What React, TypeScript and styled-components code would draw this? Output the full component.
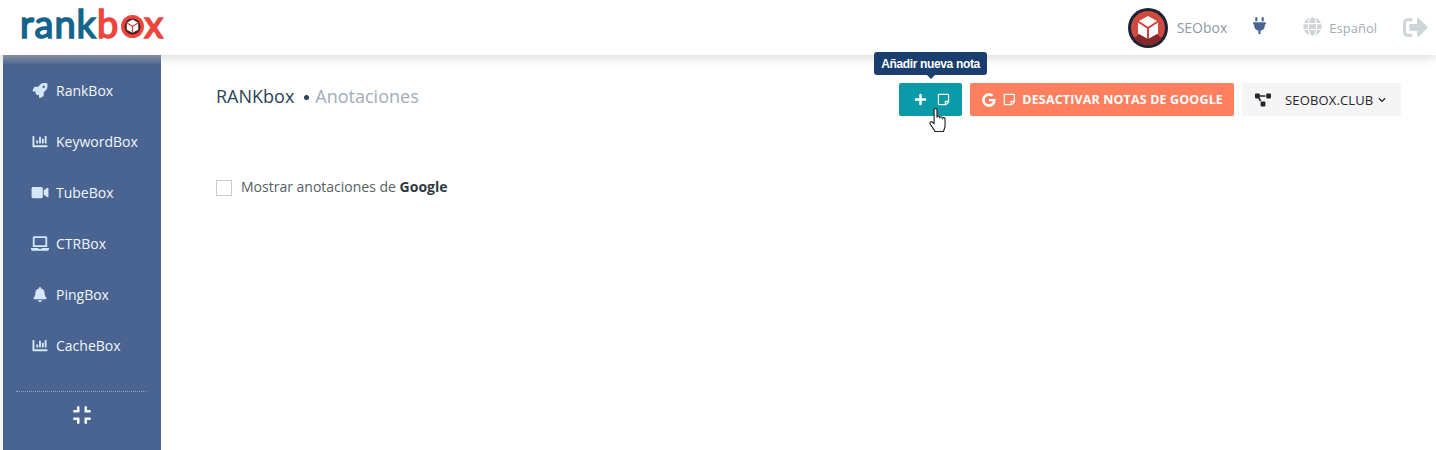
import React from "react";
import styled, { createGlobalStyle } from "styled-components";
import {
  FaBell, FaChartBar, FaChevronDown, FaCompress, FaGlobe, FaGoogle, FaLaptop, FaPlug, FaPlus,
  FaProjectDiagram, FaRegStickyNote, FaRocket, FaSignOutAlt, FaVideo,
} from "react-icons/fa";

const GlobalStyle = createGlobalStyle`
  html, body { margin: 0; padding: 0; background: #fff; }
  body { font-family: "Open Sans", "Liberation Sans", sans-serif; color: #2c3e50; overflow: hidden; }
  * { box-sizing: border-box; }
`;

const Page = styled.div`
  width: 1436px;
  height: 450px;
  display: flex;
  flex-direction: column;
  overflow: hidden;
`;

const Header = styled.header`
  height: 55px;
  flex-shrink: 0;
  display: flex;
  align-items: center;
  justify-content: space-between;
  padding: 0 8px 0 20px;
  background: #fff;
  box-shadow: 0 2px 10px rgba(0, 0, 0, 0.16);
  position: relative;
  z-index: 1;
`;

const Logo = styled.div`
  display: flex;
  align-items: center;
  font-family: "Lato", sans-serif;
  font-weight: 400;
  font-size: 38px;
  line-height: 40px;
  letter-spacing: 1px;
  margin-top: -9px;
  -webkit-text-stroke: 1.6px currentColor;
`;

const LogoPart = styled.span<{ $tone: string }>`
  color: ${(p) => p.$tone};
`;

const LogoCube = styled.span`
  display: flex;
  margin: 6px 0 0 2px;
`;

const HeaderRight = styled.div`
  display: flex;
  align-items: center;
`;

const Account = styled.span`
  display: flex;
  align-items: center;
  gap: 9px;
  font-size: 14px;
  color: #8c9aa8;
  margin-right: 24px;
`;

const PlugIcon = styled(FaPlug)`
  color: #4a6491;
  font-size: 17px;
  margin-right: 35px;
  margin-top: -4px;
`;

const Language = styled.span`
  display: flex;
  align-items: center;
  gap: 7px;
  font-size: 13px;
  color: #a3adb5;
  margin-right: 26px;
`;

const GlobeIcon = styled(FaGlobe)`
  color: #cdd5da;
  font-size: 19px;
  margin-top: -3px;
`;

const ExitIcon = styled(FaSignOutAlt)`
  color: #ced6d9;
  font-size: 25px;
`;

const Body = styled.div`
  flex: 1;
  display: flex;
  min-height: 0;
`;

const Sidebar = styled.nav`
  width: 158px;
  margin-left: 3px;
  flex-shrink: 0;
  background: linear-gradient(#929eb2, #4a6491 10px);
  box-shadow: -3px 0 0 #f6f7f9;
  display: flex;
  flex-direction: column;
  padding-top: 10px;
`;

const NavItem = styled.a`
  height: 51px;
  display: flex;
  align-items: center;
  gap: 7px;
  padding-left: 28px;
  color: #f2f6fb;
  font-size: 14px;
  svg { width: 18px; height: 15px; color: #d3e7f7; flex-shrink: 0; }
`;

const NavDivider = styled.div`
  margin: 20px 15px 0 13px;
  border-top: 1px dotted #8fa3c1;
`;

const Collapse = styled.div`
  display: flex;
  justify-content: center;
  padding-top: 13px;
  color: #fff;
  font-size: 20px;
`;

const Main = styled.main`
  flex: 1;
  padding: 28px 35px 0 55px;
  position: relative;
  z-index: 2;
`;

const Toolbar = styled.div`
  display: flex;
  align-items: flex-start;
  justify-content: space-between;
`;

const Crumbs = styled.div`
  display: flex;
  align-items: center;
  margin-top: -1px;
  font-size: 18px;
  line-height: 28px;
  color: #2c4356;
`;

const CrumbDot = styled.span`
  width: 5px;
  height: 5px;
  border-radius: 50%;
  background: #2c4356;
  margin: 3px 6px 0 10px;
`;

const CrumbCurrent = styled.span`
  color: #a0aeb7;
`;

const Actions = styled.div`
  display: flex;
  gap: 8px;
`;

const ActionButton = styled.button<{ $bg: string; $fg: string }>`
  position: relative;
  height: 33px;
  border: 0;
  border-radius: 2px;
  padding: 0 11px;
  display: flex;
  align-items: center;
  background: ${(p) => p.$bg};
  color: ${(p) => p.$fg};
  font-family: inherit;
  font-size: 12px;
  font-weight: 700;
`;

const AddButton = styled(ActionButton)`
  width: 63px;
  padding: 0 0 0 15px;
  gap: 10px;
`;

const GoogleButton = styled(ActionButton)`
  width: 264px;
  padding-left: 12px;
  gap: 7px;
  font-size: 12.5px;
  letter-spacing: 0.14px;
  white-space: nowrap;
`;

const DomainButton = styled(ActionButton)`
  font-weight: 500;
  font-size: 13px;
  letter-spacing: 0.15px;
  width: 159px;
  padding-left: 13px;
`;

const DomainIcon = styled(FaProjectDiagram)`
  font-size: 16px;
  margin-right: 14px;
`;

const DomainCaret = styled(FaChevronDown)`
  font-size: 8px;
  margin-left: 5px;
`;

const Tooltip = styled.div`
  position: absolute;
  left: -25px;
  top: -31px;
  height: 23px;
  width: 113px;
  border-radius: 3px;
  background: #1a3e6e;
  color: #fff;
  font-family: "Liberation Sans", sans-serif;
  font-size: 12px;
  font-weight: 700;
  letter-spacing: -0.35px;
  display: flex;
  align-items: center;
  justify-content: center;
  &::after {
    content: "";
    position: absolute;
    left: 50%;
    bottom: -4px;
    margin-left: -4px;
    border: 4px solid transparent;
    border-bottom: 0;
    border-top-color: #1a3e6e;
  }
`;

const Pointer = styled.svg`
  position: absolute;
  left: 30px;
  top: 25px;
`;

const CheckRow = styled.label`
  display: flex;
  align-items: center;
  gap: 9px;
  margin-top: 61px;
  font-size: 14px;
  color: #555f66;
  b { color: #2f3a40; }
`;

const CheckBox = styled.span`
  width: 16px;
  height: 16px;
  margin-top: 2px;
  border: 1px solid #c9cdd0;
  background: #fff;
`;

const navItems = [
  { label: "RankBox", icon: <FaRocket /> },
  { label: "KeywordBox", icon: <FaChartBar /> },
  { label: "TubeBox", icon: <FaVideo /> },
  { label: "CTRBox", icon: <FaLaptop /> },
  { label: "PingBox", icon: <FaBell /> },
  { label: "CacheBox", icon: <FaChartBar /> },
];

function CubeFaces({ stroke }: { stroke: string }) {
  return (
    <>
      <path d="M20 8l10 5.500v12L20 31l-10-5.500v-12z" fill="#fff" />
      <path d="M20 20v11M20 20l-10-6.500M20 20l10-6.500" stroke={stroke} strokeWidth="2" fill="none" />
    </>
  );
}

function AvatarBadge() {
  return (
    <svg width={40} height={40} viewBox="0 0 40 40">
      <circle cx="20" cy="20" r="20" fill="#1c2433" />
      <circle cx="20" cy="20" r="17" fill="#cf4a40" />
      <path d="M6 30a17 17 0 0 0 28 0L20 20z" fill="#86282a" />
      <CubeFaces stroke="#c8423a" />
    </svg>
  );
}

function LogoBadge() {
  return (
    <svg width={23} height={23} viewBox="0 0 40 40">
      <circle cx="20" cy="20" r="17" fill="#4a1f20" stroke="#f0453c" strokeWidth="6" />
      <CubeFaces stroke="#c8423a" />
    </svg>
  );
}

export default function App() {
  return (
    <Page>
      <GlobalStyle />
      <Header>
        <Logo>
          <LogoPart $tone="#14648c">rank</LogoPart>
          <LogoPart $tone="#f0453c">b</LogoPart>
          <LogoCube><LogoBadge /></LogoCube>
          <LogoPart $tone="#f0453c">x</LogoPart>
        </Logo>
        <HeaderRight>
          <Account><AvatarBadge />SEObox</Account>
          <PlugIcon />
          <Language><GlobeIcon />Español</Language>
          <ExitIcon />
        </HeaderRight>
      </Header>
      <Body>
        <Sidebar>
          {navItems.map((item) => (
            <NavItem key={item.label}>{item.icon}{item.label}</NavItem>
          ))}
          <NavDivider />
          <Collapse><FaCompress /></Collapse>
        </Sidebar>
        <Main>
          <Toolbar>
            <Crumbs>
              RANKbox<CrumbDot /><CrumbCurrent>Anotaciones</CrumbCurrent>
            </Crumbs>
            <Actions>
              <AddButton $bg="#0a9aa8" $fg="#fff">
                <FaPlus size={13} />
                <FaRegStickyNote size={13} />
                <Tooltip>Añadir nueva nota</Tooltip>
                <Pointer width="18" height="24" viewBox="0.5 0.5 16 21.5">
                  <path
                    d="M5 2.200c0-1.600 2.600-1.600 2.600 0v6.600c0-1.500 2.400-1.500 2.400 0v.6c0-1.400 2.400-1.400 2.400 0v.7c0-1.300 2.400-1.300 2.400.2v6.200c0 2-.8 3-1.400 5H5.800c-.8-2.200-3-4.400-4.300-6.700-.9-1.700.9-2.800 2-1.500L5 14.500z"
                    fill="#fff"
                    stroke="#222"
                    strokeWidth="1"
                    strokeLinejoin="round"
                  />
                </Pointer>
              </AddButton>
              <GoogleButton $bg="#ff7f5e" $fg="#fff">
                <FaGoogle size={14} />
                <FaRegStickyNote size={13} />
                DESACTIVAR NOTAS DE GOOGLE
              </GoogleButton>
              <DomainButton $bg="#f5f5f6" $fg="#23262b">
                <DomainIcon />
                SEOBOX.CLUB
                <DomainCaret />
              </DomainButton>
            </Actions>
          </Toolbar>
          <CheckRow>
            <CheckBox />
            <span>Mostrar anotaciones de <b>Google</b></span>
          </CheckRow>
        </Main>
      </Body>
    </Page>
  );
}
